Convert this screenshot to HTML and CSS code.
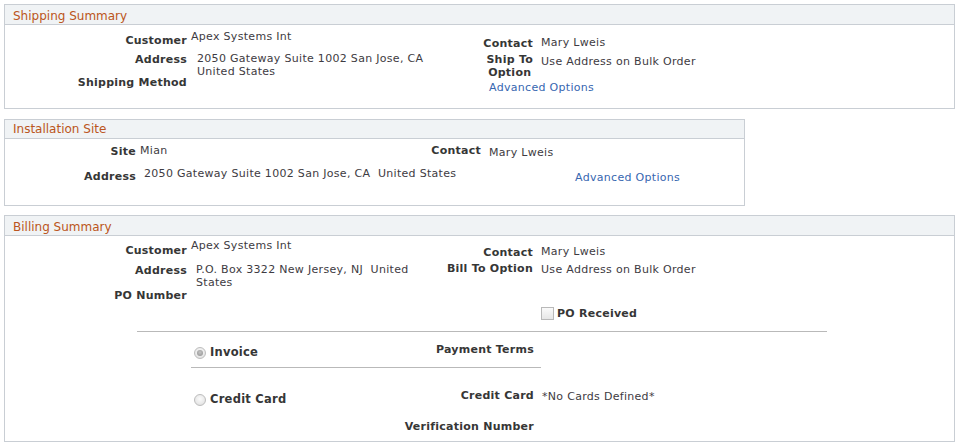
FILE: index.html
```html
<!DOCTYPE html>
<html>
<head>
<meta charset="utf-8">
<link rel="stylesheet" href="styles.css">
</head>
<body>
<div class="page">
  <section class="panel panel-ship">
    <div class="ph">Shipping Summary</div>
    <div class="pb grid-ship">
      <div class="lbl s-cust-l">Customer</div>
      <div class="val s-cust-v">Apex Systems Int</div>
      <div class="lbl s-cont-l">Contact</div>
      <div class="val s-cont-v">Mary Lweis</div>

      <div class="lbl s-addr-l">Address</div>
      <div class="val s-addr-v">2050 Gateway Suite 1002 San Jose, CA United States</div>
      <div class="lbl s-ship-l"><span class="stack">Ship To<br>Option</span></div>
      <div class="val s-ship-v">Use Address on Bulk Order</div>

      <div class="lbl s-meth-l">Shipping Method</div>
      <a class="link s-adv">Advanced Options</a>
    </div>
  </section>

  <section class="panel panel-site">
    <div class="ph ph-short">Installation Site</div>
    <div class="pb grid-site">
      <div class="lbl i-site-l">Site</div>
      <div class="val i-site-v">Mian</div>
      <div class="lbl i-cont-l">Contact</div>
      <div class="val i-cont-v">Mary Lweis</div>

      <div class="lbl i-addr-l">Address</div>
      <div class="val i-addr-v">2050 Gateway Suite 1002 San Jose, CA&nbsp; United States</div>
      <a class="link i-adv">Advanced Options</a>
    </div>
  </section>

  <section class="panel panel-bill">
    <div class="ph">Billing Summary</div>
    <div class="grid-bill">
      <div class="lbl b-cust-l">Customer</div>
      <div class="val b-cust-v">Apex Systems Int</div>
      <div class="lbl b-cont-l">Contact</div>
      <div class="val b-cont-v">Mary Lweis</div>

      <div class="lbl b-addr-l">Address</div>
      <div class="val b-addr-v">P.O. Box 3322 New Jersey, NJ&nbsp; United States</div>
      <div class="lbl b-bill-l">Bill To Option</div>
      <div class="val b-bill-v">Use Address on Bulk Order</div>

      <div class="lbl b-po-l">PO Number</div>
      <label class="check b-po-c"><span class="box"></span><span class="check-text">PO Received</span></label>
    </div>
    <div class="rule"></div>
    <div class="payment">
      <div class="pay-row pay-invoice">
        <div class="opt opt-invoice"><span class="radio radio-on"></span><span class="opt-text">Invoice</span></div>
        <div class="lbl pay-terms-l">Payment Terms</div>
      </div>
      <div class="pay-row pay-card">
        <div class="opt opt-card"><span class="radio"></span><span class="opt-text">Credit Card</span></div>
        <div class="lbl pay-card-l">Credit Card</div>
        <div class="val pay-card-v">*No Cards Defined*</div>
      </div>
      <div class="pay-row pay-verify">
        <div></div>
        <div class="lbl pay-ver-l">Verification Number</div>
      </div>
    </div>
  </section>
</div>
</body>
</html>
```
FILE: styles.css
```css
html, body {
  margin: 0;
  background: #ffffff;
}
body {
  font-family: "DejaVu Sans", Verdana, sans-serif;
  font-size: 11px;
  color: #3a3a3a;
}
.page {
  padding: 4px 0 0 4px;
}
.panel {
  box-sizing: border-box;
  border: 1px solid #c9ced4;
  background: #ffffff;
}
.panel-ship { width: 951px; height: 105px; }
.panel-site { width: 741px; height: 87px; margin-top: 10px; }
.panel-bill { width: 951px; height: 227px; margin-top: 9px; }

.ph {
  box-sizing: border-box;
  height: 20px;
  padding-top: 2px;
  line-height: 18px;
  background: #f0f3f5;
  border-bottom: 1px solid #c9ced4;
  padding-left: 8px;
  font-size: 12px;
  color: #bb5520;
}
.ph-short { height: 19px; padding-top: 0; line-height: 18px; }

.lbl {
  font-weight: bold;
  text-align: right;
  letter-spacing: 0.25px;
  line-height: 13px;
  white-space: nowrap;
  color: #363636;
}
.val {
  letter-spacing: 0.3px;
  line-height: 13px;
  color: #3e3b42;
}
.link {
  letter-spacing: 0.3px;
  line-height: 13px;
  color: #3766b0;
  white-space: nowrap;
}
.stack {
  display: inline-block;
  text-align: center;
}

.pb, .grid-bill {
  display: grid;
  align-items: start;
}

/* Shipping summary */
.grid-ship {
  grid-template-columns: 182px 289px 57px 1fr;
  grid-template-rows: 22px 25px 36px;
}
.s-cust-l { grid-column: 1; grid-row: 1; margin-top: 9px; }
.s-cust-v { grid-column: 2; grid-row: 1; margin-top: 5px; padding-left: 4px; }
.s-cont-l { grid-column: 3; grid-row: 1; margin-top: 12px; }
.s-cont-v { grid-column: 4; grid-row: 1; margin-top: 11px; padding-left: 8px; }
.s-addr-l { grid-column: 1; grid-row: 2; margin-top: 6px; }
.s-addr-v { grid-column: 2; grid-row: 2; margin-top: 5px; padding-left: 10px; width: 240px; }
.s-ship-l { grid-column: 3; grid-row: 2; margin-top: 6px; }
.s-ship-v { grid-column: 4; grid-row: 2; margin-top: 8px; padding-left: 8px; }
.s-meth-l { grid-column: 1; grid-row: 3; margin-top: 4px; }
.s-adv { grid-column: 3 / 5; grid-row: 3; margin-top: 9px; padding-left: 13px; }

/* Installation site */
.grid-site {
  grid-template-columns: 131px 284px 61px 1fr;
  grid-template-rows: 24px 42px;
}
.i-site-l { grid-column: 1; grid-row: 1; margin-top: 6px; }
.i-site-v { grid-column: 2; grid-row: 1; margin-top: 5px; padding-left: 4px; }
.i-cont-l { grid-column: 3; grid-row: 1; margin-top: 5px; }
.i-cont-v { grid-column: 4; grid-row: 1; margin-top: 7px; padding-left: 8px; }
.i-addr-l { grid-column: 1; grid-row: 2; margin-top: 7px; }
.i-addr-v { grid-column: 2 / 4; grid-row: 2; margin-top: 4px; padding-left: 8px; white-space: nowrap; }
.i-adv { grid-column: 4; grid-row: 2; margin-top: 8px; padding-left: 94px; }

/* Billing summary */
.grid-bill {
  grid-template-columns: 182px 251px 95px 1fr;
  grid-template-rows: 22px 25px 48px;
}
.b-cust-l { grid-column: 1; grid-row: 1; margin-top: 8px; }
.b-cust-v { grid-column: 2; grid-row: 1; margin-top: 3px; padding-left: 4px; }
.b-cont-l { grid-column: 3; grid-row: 1; margin-top: 10px; }
.b-cont-v { grid-column: 4; grid-row: 1; margin-top: 9px; padding-left: 8px; }
.b-addr-l { grid-column: 1; grid-row: 2; margin-top: 6px; }
.b-addr-v { grid-column: 2; grid-row: 2; margin-top: 5px; padding-left: 9px; width: 228px; }
.b-bill-l { grid-column: 3; grid-row: 2; margin-top: 4px; }
.b-bill-v { grid-column: 4; grid-row: 2; margin-top: 5px; padding-left: 8px; }
.b-po-l { grid-column: 1; grid-row: 3; margin-top: 6px; }
.b-po-c { grid-column: 4; grid-row: 3; margin-top: 24px; margin-left: 8px; }

.check {
  display: flex;
  align-items: center;
  gap: 3px;
}
.box {
  box-sizing: border-box;
  width: 13px;
  height: 13px;
  border: 1px solid #b9b9b9;
  background: linear-gradient(#fafafa, #e6e6e6);
}
.check-text {
  font-weight: bold;
  letter-spacing: 0.25px;
  line-height: 13px;
  color: #363636;
}

.rule {
  margin-left: 132px;
  width: 690px;
  height: 1px;
  background: #b9b9b9;
}

.payment {
  margin-left: 186px;
}
.pay-row {
  display: grid;
  grid-template-columns: 209px 141px 1fr;
  align-items: start;
}
.pay-invoice {
  width: 350px;
  height: 35px;
  border-bottom: 1px solid #b9b9b9;
}
.pay-card { height: 44px; }
.pay-verify { height: 29px; }

.opt {
  display: flex;
  align-items: center;
  gap: 4px;
  padding-left: 3px;
}
.opt-invoice { margin-top: 14px; }
.opt-card { margin-top: 25px; }
.opt-text {
  font-weight: bold;
  letter-spacing: 0.25px;
  line-height: 13px;
  font-size: 11.5px;
  color: #363636;
}
.radio {
  box-sizing: border-box;
  width: 12px;
  height: 12px;
  border-radius: 50%;
  border: 1px solid #bdbdbd;
  background: radial-gradient(circle at 50% 40%, #fbfbfb 0%, #e9e9e9 60%, #d6d6d6 100%);
  position: relative;
}
.radio-on::after {
  content: "";
  position: absolute;
  left: 2px;
  top: 2px;
  width: 6px;
  height: 6px;
  border-radius: 50%;
  background: radial-gradient(circle at 50% 40%, #c4c4c4 0%, #8e8e8e 100%);
}
.pay-terms-l { margin-top: 11px; padding-right: 7px; }
.pay-card-l { margin-top: 21px; padding-right: 7px; }
.pay-card-v { margin-top: 22px; padding-left: 1px; }
.pay-ver-l { margin-top: 8px; padding-right: 7px; }
```
